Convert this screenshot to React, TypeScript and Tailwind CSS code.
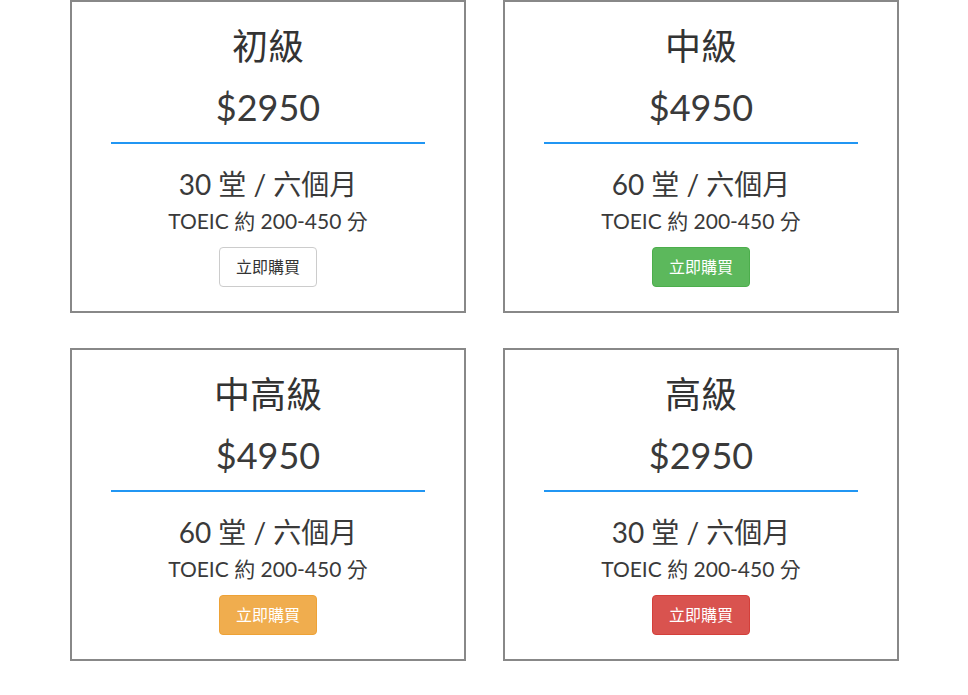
const plans = [
  { name: "初級", price: "$2950", lessons: "30 堂 / 六個月", btn: "border-[#cccccc] bg-white text-[#333333]" },
  { name: "中級", price: "$4950", lessons: "60 堂 / 六個月", btn: "border-[#4cae4c] bg-[#5cb85c] text-white" },
  { name: "中高級", price: "$4950", lessons: "60 堂 / 六個月", btn: "border-[#eea236] bg-[#f0ad4e] text-white" },
  { name: "高級", price: "$2950", lessons: "30 堂 / 六個月", btn: "border-[#d43f3a] bg-[#d9534f] text-white" },
];

function PlanCard({ plan }: { plan: (typeof plans)[number] }) {
  return (
    <div className="flex h-[313px] flex-col items-center border-2 border-[#888888] bg-white">
      <h2 className="mt-[24px] text-[36px] leading-[40px] font-normal">{plan.name}</h2>
      <p className="mt-[21px] text-[36px] leading-[40px] text-[#3a3a3a]">{plan.price}</p>
      <div className="mt-[15px] h-[2px] w-4/5 bg-[#2196f3]" />
      <p className="mt-[24px] text-[28px] leading-[32px] text-[#3a3a3a]">{plan.lessons}</p>
      <p className="mt-[9px] text-[21px] leading-[24px] text-[#3a3a3a]">TOEIC 約 200-450 分</p>
      <button
        className={`mt-[14px] h-[40px] rounded-[4px] border px-4 text-[16px] ${plan.btn}`}
      >
        立即購買
      </button>
    </div>
  );
}

export default function App() {
  return (
    <div
      className="min-h-screen bg-white text-[#333333]"
      style={{ fontFamily: 'Lato, "Noto Sans CJK TC", sans-serif' }}
    >
      <div className="ml-[70px] grid w-[829px] grid-cols-2 gap-x-[37px] gap-y-[35px]">
        {plans.map(p => (
          <PlanCard key={p.name} plan={p} />
        ))}
      </div>
    </div>
  );
}
